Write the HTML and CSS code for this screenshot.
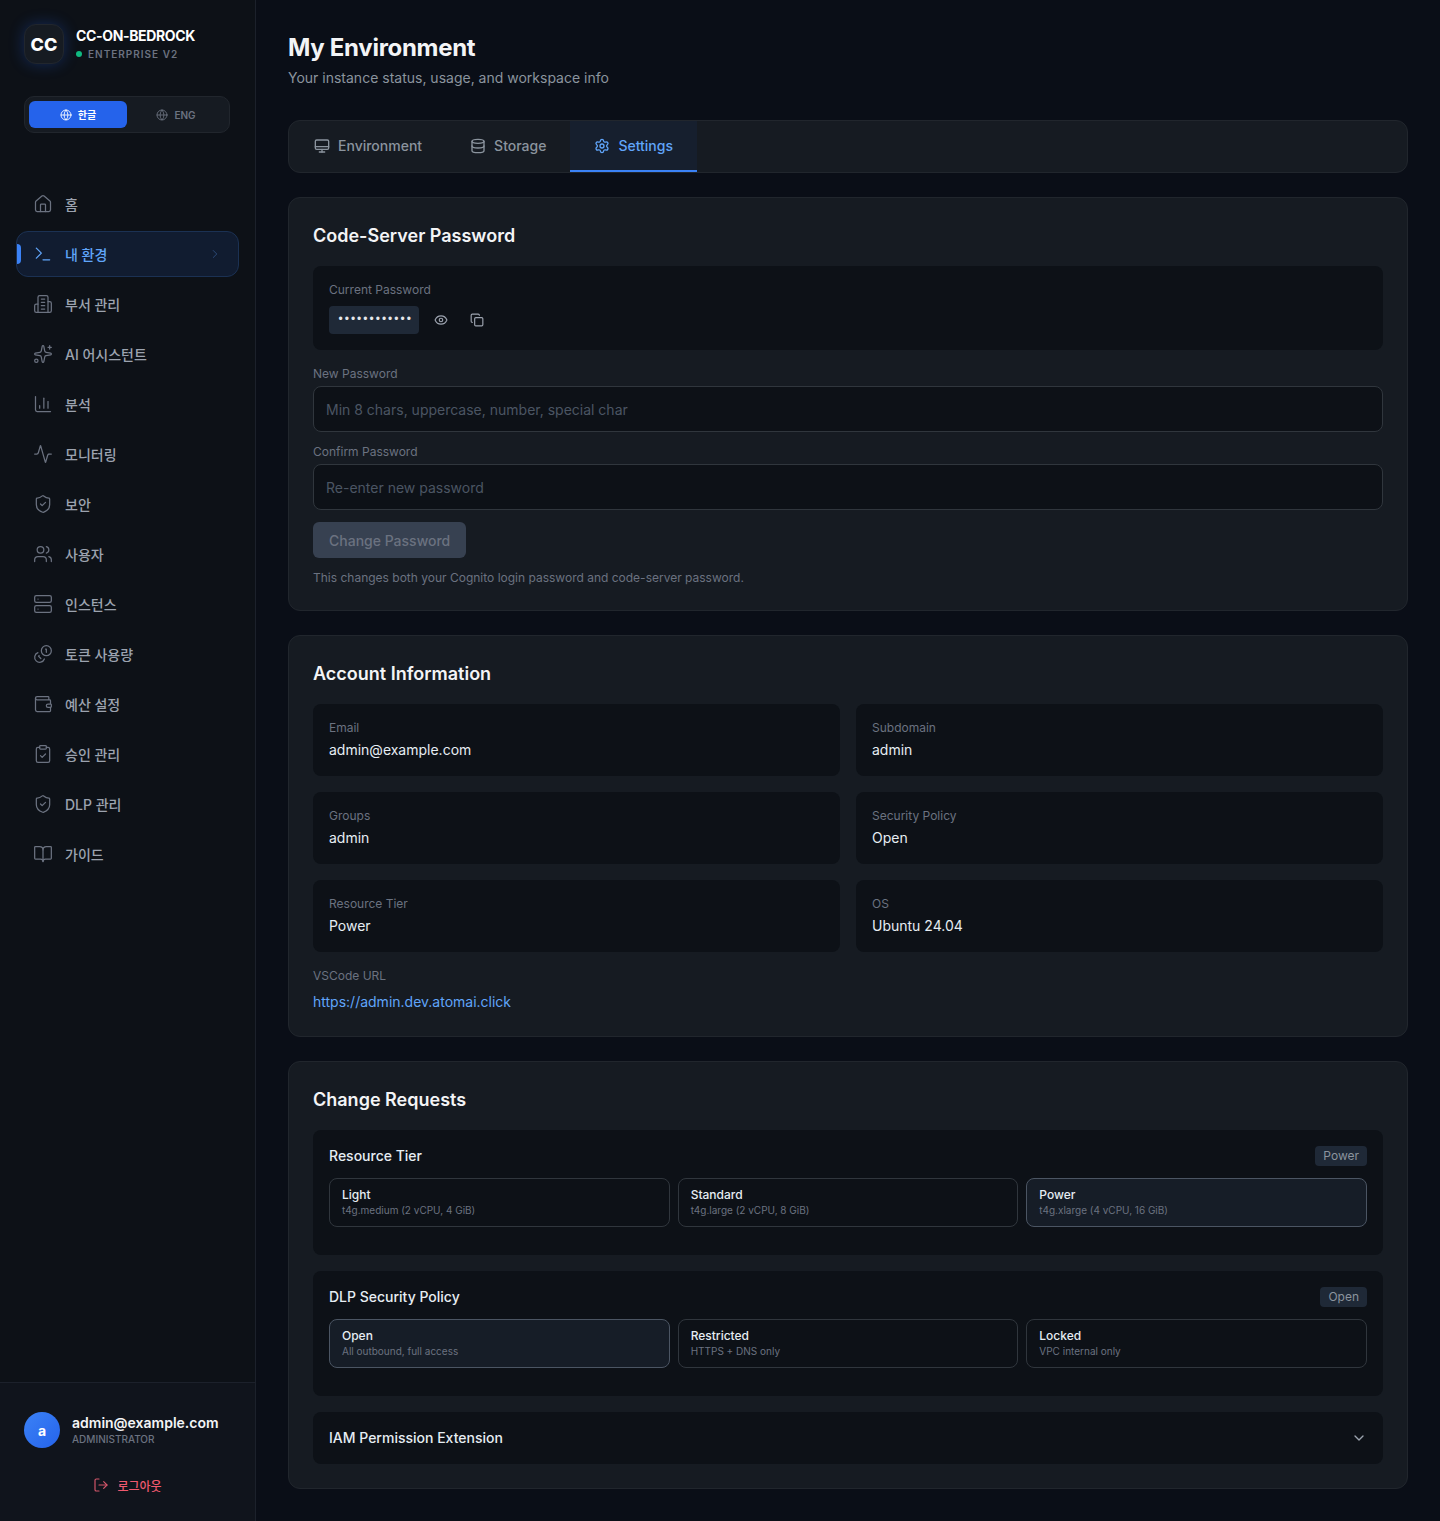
FILE: index.html
```html
<!DOCTYPE html>
<html>
<head>
    <meta charset="utf-8">
    <link rel="stylesheet" href="styles.css">
</head>
<body>
    <svg class="icon-defs" xmlns="http://www.w3.org/2000/svg">
        <symbol id="i-home" viewBox="0 0 24 24"><path d="M15 21v-8a1 1 0 0 0-1-1h-4a1 1 0 0 0-1 1v8"/><path d="M3 10a2 2 0 0 1 .709-1.528l7-5.999a2 2 0 0 1 2.582 0l7 5.999A2 2 0 0 1 21 10v9a2 2 0 0 1-2 2H5a2 2 0 0 1-2-2z"/></symbol>
        <symbol id="i-terminal" viewBox="0 0 24 24"><path d="m4 17 6-6-6-6"/><path d="M12 19h8"/></symbol>
        <symbol id="i-building" viewBox="0 0 24 24"><path d="M6 22V4a2 2 0 0 1 2-2h8a2 2 0 0 1 2 2v18Z"/><path d="M6 12H4a2 2 0 0 0-2 2v6a2 2 0 0 0 2 2h2"/><path d="M18 9h2a2 2 0 0 1 2 2v9a2 2 0 0 1-2 2h-2"/><path d="M10 6h4"/><path d="M10 10h4"/><path d="M10 14h4"/><path d="M10 18h4"/></symbol>
        <symbol id="i-sparkles" viewBox="0 0 24 24"><path d="M11.017 2.814a1 1 0 0 1 1.966 0l1.051 5.558a2 2 0 0 0 1.594 1.594l5.558 1.051a1 1 0 0 1 0 1.966l-5.558 1.051a2 2 0 0 0-1.594 1.594l-1.051 5.558a1 1 0 0 1-1.966 0l-1.051-5.558a2 2 0 0 0-1.594-1.594l-5.558-1.051a1 1 0 0 1 0-1.966l5.558-1.051a2 2 0 0 0 1.594-1.594z"/><path d="M20 2v4"/><path d="M22 4h-4"/><circle cx="4" cy="20" r="2"/></symbol>
        <symbol id="i-chart" viewBox="0 0 24 24"><path d="M3 3v16a2 2 0 0 0 2 2h16"/><path d="M18 17V9"/><path d="M13 17V5"/><path d="M8 17v-3"/></symbol>
        <symbol id="i-activity" viewBox="0 0 24 24"><path d="M22 12h-2.48a2 2 0 0 0-1.93 1.46l-2.35 8.36a.25.25 0 0 1-.48 0L9.24 2.18a.25.25 0 0 0-.48 0l-2.35 8.36A2 2 0 0 1 4.49 12H2"/></symbol>
        <symbol id="i-shield" viewBox="0 0 24 24"><path d="M20 13c0 5-3.5 7.5-7.66 8.95a1 1 0 0 1-.67-.01C7.5 20.5 4 18 4 13V6a1 1 0 0 1 1-1c2 0 4.5-1.2 6.24-2.72a1.17 1.17 0 0 1 1.52 0C14.51 3.81 17 5 19 5a1 1 0 0 1 1 1z"/><path d="m9 12 2 2 4-4"/></symbol>
        <symbol id="i-users" viewBox="0 0 24 24"><path d="M16 21v-2a4 4 0 0 0-4-4H6a4 4 0 0 0-4 4v2"/><circle cx="9" cy="7" r="4"/><path d="M22 21v-2a4 4 0 0 0-3-3.87"/><path d="M16 3.13a4 4 0 0 1 0 7.75"/></symbol>
        <symbol id="i-server" viewBox="0 0 24 24"><rect x="2" y="2" width="20" height="8" rx="2"/><rect x="2" y="14" width="20" height="8" rx="2"/><path d="M6 6h.01"/><path d="M6 18h.01"/></symbol>
        <symbol id="i-coins" viewBox="0 0 24 24"><circle cx="16" cy="8" r="6"/><path d="M5.91 10.37A6 6 0 1 0 13.66 18"/><path d="M15 6h1v4"/><path d="m7.29 13.88-.7.71 2.82 2.82"/></symbol>
        <symbol id="i-wallet" viewBox="0 0 24 24"><path d="M19 7V4a1 1 0 0 0-1-1H5a2 2 0 0 0 0 4h15a1 1 0 0 1 1 1v4h-3a2 2 0 0 0 0 4h3a1 1 0 0 0 1-1v-2a1 1 0 0 0-1-1"/><path d="M3 5v14a2 2 0 0 0 2 2h15a1 1 0 0 0 1-1v-4"/></symbol>
        <symbol id="i-clipboard" viewBox="0 0 24 24"><rect x="8" y="2" width="8" height="4" rx="1"/><path d="M16 4h2a2 2 0 0 1 2 2v14a2 2 0 0 1-2 2H6a2 2 0 0 1-2-2V6a2 2 0 0 1 2-2h2"/><path d="m9 14 2 2 4-4"/></symbol>
        <symbol id="i-book" viewBox="0 0 24 24"><path d="M12 7v14"/><path d="M3 18a1 1 0 0 1-1-1V4a1 1 0 0 1 1-1h5a4 4 0 0 1 4 4 4 4 0 0 1 4-4h5a1 1 0 0 1 1 1v13a1 1 0 0 1-1 1h-6a3 3 0 0 0-3 3 3 3 0 0 0-3-3z"/></symbol>
        <symbol id="i-logout" viewBox="0 0 24 24"><path d="M9 21H5a2 2 0 0 1-2-2V5a2 2 0 0 1 2-2h4"/><path d="m16 17 5-5-5-5"/><path d="M21 12H9"/></symbol>
        <symbol id="i-globe" viewBox="0 0 24 24"><circle cx="12" cy="12" r="10"/><path d="M12 2a14.5 14.5 0 0 0 0 20 14.5 14.5 0 0 0 0-20"/><path d="M2 12h20"/></symbol>
        <symbol id="i-monitor" viewBox="0 0 24 24"><rect x="2" y="3" width="20" height="14" rx="2"/><path d="M2 13h20"/><path d="M8 21h8"/><path d="M12 17v4"/></symbol>
        <symbol id="i-database" viewBox="0 0 24 24"><ellipse cx="12" cy="5" rx="9" ry="3"/><path d="M3 5v14a9 3 0 0 0 18 0V5"/><path d="M3 12a9 3 0 0 0 18 0"/></symbol>
        <symbol id="i-settings" viewBox="0 0 24 24"><path d="M9.671 4.136a2.34 2.34 0 0 1 4.659 0 2.34 2.34 0 0 0 3.319 1.915 2.34 2.34 0 0 1 2.33 4.033 2.34 2.34 0 0 0 0 3.831 2.34 2.34 0 0 1-2.33 4.033 2.34 2.34 0 0 0-3.319 1.915 2.34 2.34 0 0 1-4.659 0 2.34 2.34 0 0 0-3.32-1.915 2.34 2.34 0 0 1-2.33-4.033 2.34 2.34 0 0 0 0-3.831A2.34 2.34 0 0 1 6.35 6.051a2.34 2.34 0 0 0 3.319-1.915"/><circle cx="12" cy="12" r="3"/></symbol>
        <symbol id="i-eye" viewBox="0 0 24 24"><path d="M2.062 12.348a1 1 0 0 1 0-.696 10.75 10.75 0 0 1 19.876 0 1 1 0 0 1 0 .696 10.75 10.75 0 0 1-19.876 0"/><circle cx="12" cy="12" r="3"/></symbol>
        <symbol id="i-copy" viewBox="0 0 24 24"><rect x="8" y="8" width="14" height="14" rx="2"/><path d="M4 16c-1.1 0-2-.9-2-2V4c0-1.1.9-2 2-2h10c1.1 0 2 .9 2 2"/></symbol>
        <symbol id="i-chevron-right" viewBox="0 0 24 24"><path d="m9 18 6-6-6-6"/></symbol>
        <symbol id="i-chevron-down" viewBox="0 0 24 24"><path d="m6 9 6 6 6-6"/></symbol>
    </svg>

    <aside class="sidebar">
        <div class="brand">
            <div class="brand-logo">CC</div>
            <div>
                <div class="brand-name">CC-ON-BEDROCK</div>
                <div class="brand-sub"><span class="brand-dot"></span>ENTERPRISE V2</div>
            </div>
        </div>

        <div class="lang-toggle">
            <button class="lang-btn active"><svg class="icon"><use href="#i-globe"/></svg>한글</button>
            <button class="lang-btn"><svg class="icon"><use href="#i-globe"/></svg>ENG</button>
        </div>

        <nav class="nav">
            <a class="nav-item"><svg class="icon"><use href="#i-home"/></svg>홈</a>
            <a class="nav-item active"><svg class="icon"><use href="#i-terminal"/></svg>내 환경<svg class="icon nav-chevron"><use href="#i-chevron-right"/></svg></a>
            <a class="nav-item"><svg class="icon"><use href="#i-building"/></svg>부서 관리</a>
            <a class="nav-item"><svg class="icon"><use href="#i-sparkles"/></svg>AI 어시스턴트</a>
            <a class="nav-item"><svg class="icon"><use href="#i-chart"/></svg>분석</a>
            <a class="nav-item"><svg class="icon"><use href="#i-activity"/></svg>모니터링</a>
            <a class="nav-item"><svg class="icon"><use href="#i-shield"/></svg>보안</a>
            <a class="nav-item"><svg class="icon"><use href="#i-users"/></svg>사용자</a>
            <a class="nav-item"><svg class="icon"><use href="#i-server"/></svg>인스턴스</a>
            <a class="nav-item"><svg class="icon"><use href="#i-coins"/></svg>토큰 사용량</a>
            <a class="nav-item"><svg class="icon"><use href="#i-wallet"/></svg>예산 설정</a>
            <a class="nav-item"><svg class="icon"><use href="#i-clipboard"/></svg>승인 관리</a>
            <a class="nav-item"><svg class="icon"><use href="#i-shield"/></svg>DLP 관리</a>
            <a class="nav-item"><svg class="icon"><use href="#i-book"/></svg>가이드</a>
        </nav>

        <div class="sidebar-footer">
            <div class="user">
                <div class="avatar">a</div>
                <div>
                    <div class="user-name">admin@example.com</div>
                    <div class="user-role">ADMINISTRATOR</div>
                </div>
            </div>
            <button class="logout"><svg class="icon"><use href="#i-logout"/></svg>로그아웃</button>
        </div>
    </aside>

    <main class="main">
        <h1 class="page-title">My Environment</h1>
        <p class="page-sub">Your instance status, usage, and workspace info</p>

        <div class="tabs">
            <div class="tab"><svg class="icon"><use href="#i-monitor"/></svg>Environment</div>
            <div class="tab"><svg class="icon"><use href="#i-database"/></svg>Storage</div>
            <div class="tab active"><svg class="icon"><use href="#i-settings"/></svg>Settings</div>
        </div>

        <section class="card">
            <h2 class="card-title">Code-Server Password</h2>
            <div class="panel">
                <div class="label">Current Password</div>
                <div class="current-pw">
                    <span class="pw-value">••••••••••••</span>
                    <svg class="icon pw-icon"><use href="#i-eye"/></svg>
                    <svg class="icon pw-icon"><use href="#i-copy"/></svg>
                </div>
            </div>
            <div class="field first">
                <label class="label">New Password</label>
                <input class="input" type="password" placeholder="Min 8 chars, uppercase, number, special char">
            </div>
            <div class="field">
                <label class="label">Confirm Password</label>
                <input class="input" type="password" placeholder="Re-enter new password">
            </div>
            <button class="btn-change" disabled>Change Password</button>
            <p class="note">This changes both your Cognito login password and code-server password.</p>
        </section>

        <section class="card">
            <h2 class="card-title">Account Information</h2>
            <div class="info-grid">
                <div class="info-cell"><div class="label">Email</div><div class="info-value">admin@example.com</div></div>
                <div class="info-cell"><div class="label">Subdomain</div><div class="info-value">admin</div></div>
                <div class="info-cell"><div class="label">Groups</div><div class="info-value">admin</div></div>
                <div class="info-cell"><div class="label">Security Policy</div><div class="info-value">Open</div></div>
                <div class="info-cell"><div class="label">Resource Tier</div><div class="info-value">Power</div></div>
                <div class="info-cell"><div class="label">OS</div><div class="info-value">Ubuntu 24.04</div></div>
            </div>
            <div class="label url-label">VSCode URL</div>
            <a class="url-link">https://admin.dev.atomai.click</a>
        </section>

        <section class="card">
            <h2 class="card-title">Change Requests</h2>

            <div class="panel request">
                <div class="request-head">
                    <span class="request-title">Resource Tier</span>
                    <span class="badge">Power</span>
                </div>
                <div class="options">
                    <div class="option"><div class="option-name">Light</div><div class="option-desc">t4g.medium (2 vCPU, 4 GiB)</div></div>
                    <div class="option"><div class="option-name">Standard</div><div class="option-desc">t4g.large (2 vCPU, 8 GiB)</div></div>
                    <div class="option selected"><div class="option-name">Power</div><div class="option-desc">t4g.xlarge (4 vCPU, 16 GiB)</div></div>
                </div>
            </div>

            <div class="panel request">
                <div class="request-head">
                    <span class="request-title">DLP Security Policy</span>
                    <span class="badge">Open</span>
                </div>
                <div class="options">
                    <div class="option selected"><div class="option-name">Open</div><div class="option-desc">All outbound, full access</div></div>
                    <div class="option"><div class="option-name">Restricted</div><div class="option-desc">HTTPS + DNS only</div></div>
                    <div class="option"><div class="option-name">Locked</div><div class="option-desc">VPC internal only</div></div>
                </div>
            </div>

            <div class="panel collapse">
                <span class="request-title">IAM Permission Extension</span>
                <svg class="icon"><use href="#i-chevron-down"/></svg>
            </div>
        </section>
    </main>
</body>
</html>
```

FILE: styles.css
```css
* {
    box-sizing: border-box;
}

body {
    margin: 0;
    display: flex;
    min-height: 100vh;
    background: #0a0e17;
    color: #e6edf3;
    font-family: Inter, "Noto Sans CJK KR", sans-serif;
}

.icon-defs {
    display: none;
}

.icon {
    fill: none;
    stroke: currentColor;
    stroke-width: 2;
    stroke-linecap: round;
    stroke-linejoin: round;
    flex-shrink: 0;
}

/* sidebar */
.sidebar {
    width: 256px;
    flex-shrink: 0;
    display: flex;
    flex-direction: column;
    background: #0d1117;
    border-right: 1px solid #1c212b;
}

.brand {
    display: flex;
    align-items: center;
    gap: 12px;
    padding: 24px 24px 0;
}

.brand-logo {
    width: 40px;
    height: 40px;
    display: flex;
    align-items: center;
    justify-content: center;
    background: #161b22;
    border: 1px solid #21262d;
    border-radius: 12px;
    box-shadow: 0 0 15px rgba(37, 99, 235, 0.3);
    color: #fff;
    font-size: 18px;
    font-weight: 800;
}

.brand-name {
    font-size: 14px;
    font-weight: 700;
    line-height: 18px;
    letter-spacing: -0.35px;
    color: #fff;
}

.brand-sub {
    display: flex;
    align-items: center;
    gap: 6px;
    margin-top: 2px;
    padding-left: 0;
    font-size: 10px;
    font-weight: 600;
    line-height: 14px;
    letter-spacing: 1px;
    color: #6b7280;
}

.brand-dot {
    width: 6px;
    height: 6px;
    border-radius: 50%;
    background: #10b981;
}

.lang-toggle {
    display: flex;
    margin: 32px 25px 0 24px;
    padding: 4px;
    background: #161b22;
    border: 1px solid #21262d;
    border-radius: 10px;
}

.lang-btn {
    flex: 1;
    height: 27px;
    display: flex;
    align-items: center;
    justify-content: center;
    gap: 6px;
    background: none;
    border: none;
    border-radius: 6px;
    color: #6b7280;
    font-family: inherit;
    font-size: 10px;
    font-weight: 600;
}

.lang-btn .icon {
    width: 12px;
    height: 12px;
    stroke-width: 1.75;
}

.lang-btn.active {
    background: #2563eb;
    color: #fff;
}

.nav {
    display: flex;
    flex-direction: column;
    gap: 4px;
    padding: 48px 16px 0;
}

.nav-item {
    position: relative;
    height: 46px;
    display: flex;
    align-items: center;
    gap: 12px;
    padding: 0 16px;
    border: 1px solid transparent;
    border-radius: 12px;
    color: #9ca3af;
    font-size: 14px;
    font-weight: 500;
}

.nav-item .icon {
    width: 20px;
    height: 20px;
    stroke-width: 1.5;
    color: #6b7280;
}

.nav-item.active {
    background: #111c30;
    border-color: #1b3153;
    color: #60a5fa;
}

.nav-item.active::before {
    content: "";
    position: absolute;
    left: 0;
    top: 12px;
    width: 4px;
    height: 20px;
    background: #3b82f6;
    border-radius: 0 4px 4px 0;
}

.nav-item.active .icon {
    color: #60a5fa;
}

.nav-item.active .nav-chevron {
    width: 14px;
    height: 14px;
    margin-left: auto;
    margin-right: 0;
    color: #2f4f80;
}

.sidebar-footer {
    margin-top: auto;
    padding: 29px 24px 23px;
    background: #10141c;
    border-top: 1px solid #1c212b;
}

.user {
    display: flex;
    align-items: center;
    gap: 12px;
}

.avatar {
    width: 36px;
    height: 36px;
    display: flex;
    align-items: center;
    justify-content: center;
    border-radius: 50%;
    background: linear-gradient(135deg, #3b82f6, #2563eb);
    color: #fff;
    font-size: 14px;
    font-weight: 700;
}

.user-name {
    font-size: 14px;
    font-weight: 600;
    line-height: 18px;
    color: #f3f4f6;
}

.user-role {
    font-size: 10px;
    font-weight: 500;
    line-height: 14px;
    color: #6b7280;
}

.logout {
    width: 100%;
    height: 26px;
    margin-top: 24px;
    display: flex;
    align-items: center;
    justify-content: center;
    gap: 8px;
    background: none;
    border: none;
    color: #f0596f;
    font-family: inherit;
    font-size: 12px;
    font-weight: 500;
}

.logout .icon {
    width: 16px;
    height: 16px;
    color: #d4566a;
    stroke-width: 1.75;
}

/* main */
.main {
    flex: 1;
    min-width: 0;
    padding: 32px;
}

.page-title {
    margin: 0;
    font-size: 24px;
    font-weight: 700;
    line-height: 32px;
    letter-spacing: -0.3px;
    color: #f3f4f6;
}

.page-sub {
    margin: 4px 0 0;
    font-size: 14px;
    line-height: 20px;
    color: #8b949e;
}

.tabs {
    display: flex;
    height: 53px;
    margin-top: 32px;
    padding-left: 1px;
    background: #161b22;
    border: 1px solid #21262d;
    border-radius: 12px;
}

.tab {
    display: flex;
    align-items: center;
    gap: 8px;
    padding: 0 24px;
    border-bottom: 2px solid transparent;
    color: #8b949e;
    font-size: 14px;
    font-weight: 500;
}

.tab .icon {
    width: 16px;
    height: 16px;
}

.tab.active {
    background: #161f2e;
    border-bottom-color: #3b82f6;
    color: #60a5fa;
}

.card {
    margin-top: 24px;
    padding: 24px;
    background: #161b22;
    border: 1px solid #21262d;
    border-radius: 12px;
}

.card-title {
    margin: 0 0 16px;
    font-size: 18px;
    font-weight: 600;
    line-height: 28px;
    color: #f3f4f6;
}

.panel {
    background: #0d1117;
    border-radius: 8px;
    padding: 16px;
}

.label {
    display: block;
    font-size: 12px;
    line-height: 16px;
    color: #6b7280;
}

.current-pw {
    display: flex;
    align-items: center;
    margin-top: 8px;
}

.pw-value {
    height: 28px;
    display: flex;
    align-items: center;
    padding: 0 8px;
    background: #1f2937;
    border-radius: 4px;
    color: #e5e7eb;
    font-size: 12px;
    font-family: "Liberation Mono", monospace;
    letter-spacing: -1px;
}

.pw-icon {
    width: 14px;
    height: 14px;
    margin-left: 15px;
    margin-right: 7px;
    color: #9ca3af;
}

.field {
    margin-top: 12px;
}

.field.first {
    margin-top: 16px;
}

.input {
    display: block;
    width: 100%;
    height: 46px;
    margin-top: 4px;
    padding: 0 12px;
    background: #0d1117;
    border: 1px solid #30363d;
    border-radius: 8px;
    color: #e6edf3;
    font-family: inherit;
    font-size: 14px;
}

.input::placeholder {
    color: #4b5563;
}

.btn-change {
    display: block;
    height: 36px;
    margin-top: 12px;
    padding: 0 16px;
    background: #374151;
    border: none;
    border-radius: 6px;
    color: #6b7280;
    font-family: inherit;
    font-size: 14px;
    font-weight: 500;
}

.note {
    margin: 12px 0 0;
    font-size: 12px;
    line-height: 16px;
    color: #6b7280;
}

.info-grid {
    display: grid;
    grid-template-columns: 1fr 1fr;
    gap: 16px;
}

.info-cell {
    height: 72px;
    padding: 16px;
    background: #0d1117;
    border-radius: 8px;
}

.info-value {
    margin-top: 4px;
    font-size: 14px;
    line-height: 20px;
    color: #e6edf3;
}

.url-label {
    margin-top: 16px;
}

.url-link {
    display: block;
    margin-top: 8px;
    font-size: 14px;
    line-height: 20px;
    color: #60a5fa;
}

.request {
    margin-bottom: 16px;
    padding-bottom: 28px;
}

.request-head {
    display: flex;
    align-items: center;
    justify-content: space-between;
    height: 20px;
    margin-bottom: 12px;
}

.request-title {
    font-size: 14px;
    font-weight: 500;
    line-height: 20px;
    color: #e6edf3;
}

.badge {
    height: 20px;
    padding: 0 8px;
    background: #1f2937;
    border-radius: 4px;
    color: #8b949e;
    font-size: 12px;
    line-height: 20px;
}

.options {
    display: grid;
    grid-template-columns: repeat(3, 1fr);
    gap: 8px;
}

.option {
    height: 49px;
    padding: 8px 12px;
    border: 1px solid #30363d;
    border-radius: 8px;
}

.option.selected {
    background: #161d27;
    border-color: #4b5563;
}

.option-name {
    font-size: 12px;
    font-weight: 500;
    line-height: 16px;
    color: #e6edf3;
}

.option-desc {
    font-size: 10px;
    line-height: 15px;
    color: #6b7280;
}

.collapse {
    display: flex;
    align-items: center;
    justify-content: space-between;
}

.collapse .icon {
    width: 16px;
    height: 16px;
    color: #9ca3af;
}
```
